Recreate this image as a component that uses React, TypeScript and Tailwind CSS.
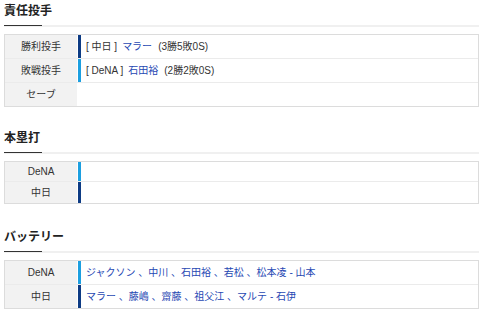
const font = { fontFamily: '"Liberation Sans", "Noto Sans CJK JP", sans-serif' }

const NAVY = 'bg-[#0d3b84]'
const SKY = 'bg-[#1c9fe0]'

type Row = { label: string; bar?: string; h: string; content?: React.ReactNode }

function Heading({ title }: { title: string }) {
  return (
    <div>
      <h2 className="pl-[4px] text-[12px] font-bold leading-[16px] text-[#222]">{title}</h2>
      <div className="ml-[4px] mr-[1px] mt-[6px] h-[2px] bg-[#f0f0f0]">
        <div className="h-[1px] w-[38px] bg-[#333]" />
      </div>
    </div>
  )
}

function Table({ rows }: { rows: Row[] }) {
  return (
    <div className="ml-[4px] mr-[1px] mt-[7px] border border-[#dcdcdc]">
      {rows.map((r, i) => (
        <div
          key={i}
          className={`flex ${r.h} ${i < rows.length - 1 ? 'border-b border-[#ebebeb]' : ''}`}
        >
          <div className="flex w-[72px] shrink-0 items-center justify-center bg-[#f2f2f2] text-[10px] text-[#333]">
            {r.label}
          </div>
          <div className={`ml-[1px] w-[3px] shrink-0 ${r.bar ?? ''}`} />
          <div className="flex items-center pl-[5px] text-[10px] text-[#333]">{r.content}</div>
        </div>
      ))}
    </div>
  )
}

const link = 'text-[#1f48b3]'

function Pitcher({ team, name, stats }: { team: string; name: string; stats: string }) {
  return (
    <span className="flex items-center whitespace-pre">
      <span>{`[ ${team} ]`}</span>
      <span className={`ml-[5px] ${link}`}>{name}</span>
      <span className="ml-[6px]">{stats}</span>
    </span>
  )
}

export default function App() {
  return (
    <div className="h-[309px] w-[480px] overflow-hidden bg-white pt-[3px]" style={font}>
      <Heading title="責任投手" />
      <Table
        rows={[
          {
            label: '勝利投手',
            bar: NAVY,
            h: 'h-[24px]',
            content: <Pitcher team="中日" name="マラー" stats="(3勝5敗0S)" />,
          },
          {
            label: '敗戦投手',
            bar: SKY,
            h: 'h-[24px]',
            content: <Pitcher team="DeNA" name="石田裕" stats="(2勝2敗0S)" />,
          },
          { label: 'セーブ', h: 'h-[23px]' },
        ]}
      />

      <div className="mt-[23px]">
        <Heading title="本塁打" />
        <Table
          rows={[
            { label: 'DeNA', bar: SKY, h: 'h-[20px]' },
            { label: '中日', bar: NAVY, h: 'h-[21px]' },
          ]}
        />
      </div>

      <div className="mt-[25px]">
        <Heading title="バッテリー" />
        <Table
          rows={[
            {
              label: 'DeNA',
              bar: SKY,
              h: 'h-[24px]',
              content: <span className={link}>ジャクソン 、中川 、石田裕 、若松 、松本凌 - 山本</span>,
            },
            {
              label: '中日',
              bar: NAVY,
              h: 'h-[23px]',
              content: <span className={link}>マラー 、藤嶋 、齋藤 、祖父江 、マルテ - 石伊</span>,
            },
          ]}
        />
      </div>
    </div>
  )
}
